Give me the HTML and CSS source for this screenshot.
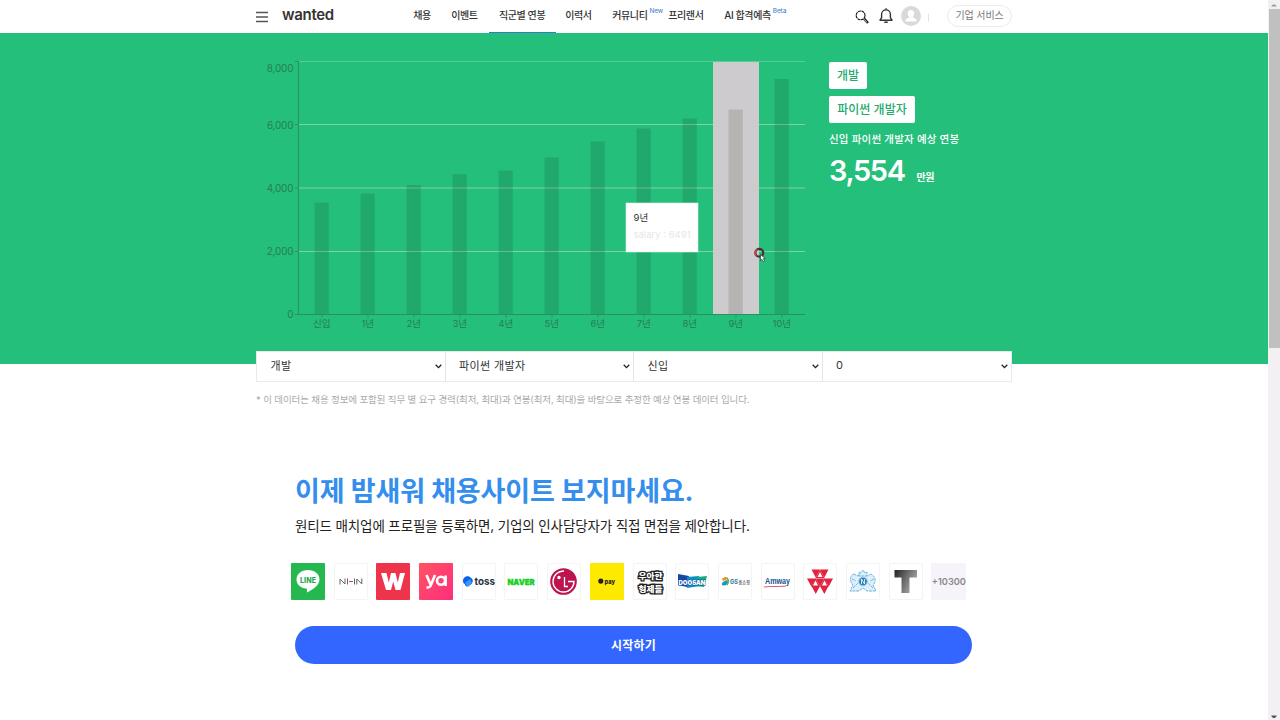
FILE: index.html
```html
<!DOCTYPE html>
<html lang="ko">
<head>
<meta charset="utf-8">
<title>wanted - 직군별 연봉</title>
<link rel="stylesheet" href="styles.css">
</head>
<body>
<div class="page">
  <header class="header">
    <div class="header-inner">
      <div class="brand">
        <svg class="burger" width="12" height="12" viewBox="0 0 12 12" stroke="#555" stroke-width="1.5"><path d="M0 1.500h12M0 6h12M0 10.500h12"/></svg>
        <span class="logo">wanted</span>
      </div>
      <nav class="nav">
        <a>채용</a><a>이벤트</a><a class="active">직군별 연봉</a><a>이력서</a><a>커뮤니티<sup>New</sup></a><a>프리랜서</a><a>AI 합격예측<sup>Beta</sup></a>
      </nav>
      <div class="tools">
        <svg width="14" height="14" viewBox="0 0 14 14" fill="none" stroke="#111"><circle cx="5.600" cy="5.400" r="4.400" stroke-width="1.100" stroke-dasharray="3 .5"/><path d="M9 8.600l4 4.400" stroke-width="2.400"/><path d="M8.700 9l3.600 3.600" stroke="#fff" stroke-width=".8"/></svg>
        <svg class="bell" width="14" height="16" viewBox="0 0 14 16" fill="none" stroke="#333" stroke-width="1.400"><path d="M1 12.200h12L11.400 9.700V6.300a4.400 4.400 0 0 0-8.800 0v3.400L1 12.200z" stroke-linejoin="round"/><path d="M5.300 14.300h3.400M7 .3v1.500"/></svg>
        <svg class="avatar" width="20" height="20" viewBox="0 0 20 20"><circle cx="10" cy="10" r="10" fill="#d9d9d9"/><ellipse cx="10" cy="7.800" rx="3.200" ry="3.700" fill="#fff"/><path d="M4.300 15.600c0-3 2.600-3.400 4.200-4.300h3c1.600.9 4.200 1.300 4.200 4.300z" fill="#fff"/></svg>
        <i class="divider"></i>
        <a class="biz">기업 서비스</a>
      </div>
    </div>
  </header>

  <section class="salary">
    <div class="salary-inner">
      <svg class="chart" width="560" height="290" viewBox="250 50 560 290">
        <g stroke="#82d0a6" stroke-width="1"><path d="M299 61.500h506" stroke="#58cb96"/><path d="M299 124.500h506M299 188h506M299 251.500h506"/></g>
        <rect x="713" y="62" width="46" height="252.500" fill="#cecbce"/>
        <g class="bars">
          <rect x="314.500" y="202.500" width="14.300" height="112"/><rect x="360.500" y="193.500" width="14.300" height="121"/><rect x="406.500" y="185" width="14.300" height="129.500"/><rect x="452.500" y="174.200" width="14.300" height="140.300"/><rect x="498.500" y="170.500" width="14.300" height="144"/><rect x="544.500" y="157.500" width="14.300" height="157"/><rect x="590.500" y="141.500" width="14.300" height="173"/><rect x="636.500" y="128.500" width="14.300" height="186"/><rect x="682.500" y="118.500" width="14.300" height="196"/><rect class="hovered" x="728.500" y="109.500" width="14.300" height="205"/><rect x="774.500" y="79" width="14.300" height="235.500"/>
        </g>
        <g fill="none" stroke="#2c8f61" stroke-width="1"><path d="M298.500 61.500v253H805M295 61.500h4M295 124.500h4M295 188h4M295 251.500h4M295 314.500h4"/><path d="M322 314.500v3M368 314.500v3M414 314.500v3M460 314.500v3M506 314.500v3M552 314.500v3M598 314.500v3M644 314.500v3M690 314.500v3M736 314.500v3M782 314.500v3"/></g>
        <g class="ylab"><text x="293.300" y="72.300">8,000</text><text x="293.300" y="128.800">6,000</text><text x="293.300" y="191.800">4,000</text><text x="293.300" y="255.100">2,000</text><text x="293.300" y="318.300">0</text></g>
        <g class="xlab"><text x="321.700" y="327.200">신입</text><text x="367.700" y="327.200">1년</text><text x="413.700" y="327.200">2년</text><text x="459.700" y="327.200">3년</text><text x="505.700" y="327.200">4년</text><text x="551.700" y="327.200">5년</text><text x="597.700" y="327.200">6년</text><text x="643.700" y="327.200">7년</text><text x="689.700" y="327.200">8년</text><text x="735.700" y="327.200">9년</text><text x="781.700" y="327.200">10년</text></g>
        <rect x="626" y="203" width="72" height="49" fill="#fff" stroke="#dcefe5" stroke-width=".6"/>
        <text class="tip" x="633.500" y="221.300">9년</text>
        <text class="tip faint" x="633.500" y="238.300" textLength="57">salary : 6491</text>
        <circle cx="759.300" cy="252.800" r="3.900" fill="none" stroke="#4b3037" stroke-width="2.200"/><path d="M756.500 256a4 4 0 0 1 1-6.800" fill="none" stroke="#c9424e" stroke-width="1.500"/>
        <path d="M760.500 254.500v6l1.500-1.200 1.300 2.200 1.300-.8-1.200-2.100h1.800z" fill="#fff" stroke="#222" stroke-width=".6"/>
      </svg>
      <div class="summary">
        <span class="tag">개발</span>
        <span class="tag wide">파이썬 개발자</span>
        <p class="expect">신입 파이썬 개발자 예상 연봉</p>
        <p class="amount">3,554<small>만원</small></p>
      </div>
    </div>
  </section>

  <main class="main">
    <div class="filters">
      <div class="filter">개발<svg width="7" height="5" viewBox="0 0 7 5"><path d="M.7.800l2.800 2.800L6.300.800"/></svg></div>
      <div class="filter">파이썬 개발자<svg width="7" height="5" viewBox="0 0 7 5"><path d="M.7.800l2.800 2.800L6.300.800"/></svg></div>
      <div class="filter">신입<svg width="7" height="5" viewBox="0 0 7 5"><path d="M.7.800l2.800 2.800L6.300.800"/></svg></div>
      <div class="filter">0<svg width="7" height="5" viewBox="0 0 7 5"><path d="M.7.800l2.800 2.800L6.300.800"/></svg></div>
    </div>
    <p class="note">* 이 데이터는 채용 정보에 포함된 직무 별 요구 경력(최저, 최대)과 연봉(최저, 최대)을 바탕으로 추정한 예상 연봉 데이터 입니다.</p>

    <section class="match">
      <h2>이제 밤새워 채용사이트 보지마세요.</h2>
      <p class="lead">원티드 매치업에 프로필을 등록하면, 기업의 인사담당자가 직접 면접을 제안합니다.</p>
      <div class="logos">
        <svg viewBox="0 0 34 37"><rect width="34" height="37" rx="1" fill="#25b84f"/><path d="M17 7c-6.500 0-11.500 4-11.500 9.500 0 5 4.300 8.500 9.600 9.100 1.200.2 1.100 1.200.7 4 4-2.100 12.700-6.600 12.700-13.100C28.500 11 23.500 7 17 7z" fill="#fff"/><text x="17" y="19.500" font-size="7" font-weight="800" text-anchor="middle" textLength="16" fill="#25a84d">LINE</text></svg>
        <svg class="plain" viewBox="0 0 34 37"><path d="M6 21.500v-5.500l5 5v-5.500M13.500 15.500v6M20.500 15.500v6M22.800 21.500v-5.500l5 5v-5.500" fill="none" stroke="#666" stroke-width="1"/><path d="M15 18.500h4" stroke="#d83b50"/></svg>
        <svg viewBox="0 0 34 37"><rect width="34" height="37" rx="1" fill="#ed344b"/><path d="M5 10h5.500l2.300 9.500L15 10h4.500l2.300 9.500L24 10h5l-4.500 17h-5L17.200 18.500 15 27h-5z" fill="#fff"/></svg>
        <svg viewBox="0 0 34 37"><defs><linearGradient id="ya" x2="1" y2="1"><stop stop-color="#ff5361"/><stop offset="1" stop-color="#ff2d7e"/></linearGradient></defs><rect width="34" height="37" rx="1" fill="url(#ya)"/><g fill="none" stroke="#fff" stroke-width="2.600"><path d="M7.500 12l4 9.500M16 12l-4.500 11c-.8 1.500-2 1.700-4 1.300"/><circle cx="22" cy="17.700" r="4"/><path d="M26.600 12.500v10.500"/></g></svg>
        <svg class="plain" viewBox="0 0 34 37"><path d="M1 18c0-5 6-6 8-3 3 1 2 6-1 7-2 2-5 2-5-1-1 0-2-1-2-3z" fill="#0b64e8"/><path d="M3 20l5-4 2 4-4 4z" fill="#3999fd"/><text x="12.500" y="22" font-size="10" font-weight="700" textLength="20.500" lengthAdjust="spacingAndGlyphs" fill="#26333f">toss</text></svg>
        <svg class="plain" viewBox="0 0 34 37"><text x="3.500" y="21.500" font-size="8" font-weight="900" textLength="27" lengthAdjust="spacingAndGlyphs" fill="#12cf20" stroke="#12cf20" stroke-width=".3">NAVER</text></svg>
        <svg class="plain" viewBox="0 0 34 37"><circle cx="16.500" cy="18.500" r="13.300" fill="#bd1450"/><path d="M17 8a10.500 10.500 0 1 0 10 10.500H21" fill="none" stroke="#fff" stroke-width="1.300"/><path d="M17.500 14v9.500H21" fill="none" stroke="#fff" stroke-width="1.300"/><circle cx="12" cy="14.500" r="1.700" fill="#fff"/></svg>
        <svg viewBox="0 0 34 37"><rect width="34" height="37" rx="1" fill="#fee900"/><path d="M8.300 17.500a2.500 2 0 0 1 5 0v1.500a2.500 1.700 0 0 1-5 0z" fill="#222"/><text x="14.500" y="20.500" font-size="6.500" font-weight="800" textLength="10.500" lengthAdjust="spacingAndGlyphs" fill="#222">pay</text></svg>
        <svg class="plain" viewBox="0 0 34 37"><g class="woowa"><text x="5.500" y="16" textLength="24" lengthAdjust="spacingAndGlyphs">우아한</text><text x="5.500" y="29" textLength="24" lengthAdjust="spacingAndGlyphs">형제들</text></g></svg>
        <svg class="plain" viewBox="0 0 34 37"><path d="M3 11l11 2-2 11-9-2z" fill="#1746a5"/><path d="M12 14l12-1 1 10-13 2z" fill="#0b91ca"/><path d="M22 14l10-1-3 11-8-1z" fill="#13ac83"/><text x="3.500" y="21.500" font-size="6.500" font-weight="900" textLength="27" lengthAdjust="spacingAndGlyphs" fill="#fff" stroke="#1747a0" stroke-width=".8" paint-order="stroke">DOOSAN</text></svg>
        <svg class="plain" viewBox="0 0 34 37"><path d="M4 16c3-3 6-2 6 0l-5 2z" fill="#f6902b"/><path d="M4 20c3-3 6-4 6-1-1 4-4 4-6 3z" fill="#1797ca"/><path d="M9 15c2 2 2 4 0 7" stroke="#58b64b" stroke-width="1.500" fill="none"/><text x="12" y="21" font-size="6.500" font-weight="700" textLength="8" lengthAdjust="spacingAndGlyphs" fill="#2475a4">GS</text><text x="20.500" y="20.800" font-size="4.800" font-weight="700" textLength="11.500" lengthAdjust="spacingAndGlyphs" fill="#777">홈쇼핑</text></svg>
        <svg class="plain" viewBox="0 0 34 37"><text class="amway" x="4" y="21" textLength="25" lengthAdjust="spacingAndGlyphs">Amway</text><path d="M3 24c7-1 15 0 22-1" stroke="#df5965" fill="none"/></svg>
        <svg class="plain" viewBox="0 0 34 37"><g fill="#e2213e"><path d="M8.500 6.500H17l-4.200 8zM17 6.500h8.500l-4.200 8zM4 15.500h8.500l-4.200 8zM12.800 15.500h8.400L17 23.500zM21.500 15.500H30l-4.200 8zM8.500 23H17l-4.200 8zM17 23h8.500l-4.200 8z"/><path d="M12.500 15l4.500-8.500 4.500 8.500zM8.300 23.500l4.200-8.500 4.500 8.500zM17 23.500l4.500-8.500 4.200 8.500z"/></g><g fill="#fff"><path d="M12.500 17.500l2.500 5h-5zM21.500 17.500l2.500 5h-5zM17 9l2.500 5h-5z"/></g></svg>
        <svg class="plain" viewBox="0 0 34 37"><g fill="#dceffa" stroke="#72b5dc" stroke-width="1" stroke-dasharray="3 .7"><path d="M8 11c-5 2-4 8-1 11l-3 6h9l4-3 4 3h9l-3-6c4-4 2-9-2-11l-4 2-4-3-5 3z"/><path d="M13 13V9l2 1 2-3 2 3 2-1v4zM6 16l4 2M28 16l-4 2M7 25l5-5M27 25l-5-5"/></g><circle cx="17" cy="18.500" r="4.300" fill="#2c80b8" stroke="#9bcbe5"/><path d="M15.500 21v-5l3 5v-5" stroke="#fff" fill="none" stroke-width=".8"/></svg>
        <svg class="plain" viewBox="0 0 34 37"><defs><linearGradient id="t" x1="0" x2="1" y2=".5"><stop stop-color="#222"/><stop offset="1" stop-color="#aaa"/></linearGradient></defs><path d="M5.500 7h22.500v7.500h-7.500V30h-8V14.500h-7z" fill="url(#t)"/></svg>
        <span class="more">+10300</span>
      </div>
      <button class="start">시작하기</button>
    </section>
  </main>
</div>
<aside class="scrollbar">
  <svg width="12" height="7" viewBox="0 0 12 7"><path d="M3 5.500l2-2h2l2 2z" fill="#999"/></svg>
  <div class="thumb"></div>
  <svg class="down" width="12" height="7" viewBox="0 0 12 7"><path d="M3 2.500h6L7 5H5z" fill="#555"/></svg>
</aside>
</body>
</html>
```
FILE: styles.css
```css
* { box-sizing: border-box; }
body { margin: 0; height: 720px; display: flex; overflow: hidden; background: #fff; color: #333; font-family: Inter, "Noto Sans CJK KR", sans-serif; }
p, h2 { margin: 0; white-space: nowrap; }
.page { width: 1268px; height: 720px; }
.header { height: 33px; background: #fff; }
.header-inner { width: 756px; height: 33px; margin: 0 auto; display: flex; }
.brand { width: 148px; display: flex; align-items: center; gap: 14px; }
.logo { font: 600 15px/30px Inter, sans-serif; letter-spacing: -.3px; color: #333; margin-top: -3px; }
.nav { width: 452px; display: grid; grid-template-columns: 38px 47px 67px 47px 56px 56px 70px; }
.nav a { padding-left: 9.500px; font: 500 10px/30px Inter, "Noto Sans CJK KR", sans-serif; letter-spacing: -.4px; white-space: nowrap; color: #333; height: 33px; }
.nav .active { padding-left: 10.200px; border-bottom: 1px solid #3779c8; }
.nav sup { display: inline-block; margin-left: 2px; font-size: 6.500px; font-weight: 400; line-height: 0; letter-spacing: -.1px; color: #3979c0; vertical-align: 6px; }
.tools { flex: 1; display: flex; align-items: center; }
.bell { margin-left: 10px; margin-top: -1px; }
.avatar { margin-left: 7.500px; margin-top: -2px; }
.divider { width: 1px; height: 8px; margin: 3px 18px 0 7.500px; background: #dce9e9; }
.biz { width: 65px; height: 22px; margin-top: -1px; border: 1px solid #ebebeb; border-radius: 11px; color: #777; font-size: 10px; line-height: 19px; letter-spacing: -.1px; text-align: center; white-space: nowrap; flex: none; }
.salary { height: 331px; background: #25bf7c; }
.salary-inner { width: 768px; margin: 0 auto; padding-top: 17px; display: flex; gap: 19px; }
.chart { display: block; flex: none; }
.bars { fill: rgba(20, 85, 50, .2); }
.bars .hovered { fill: #b5b4b3; }
.chart text { font-family: Inter, "Noto Sans CJK KR", sans-serif; }
.ylab { font-size: 9.800px; text-anchor: end; fill: #247e56; letter-spacing: -.1px; }
.xlab { font-size: 9.500px; text-anchor: middle; fill: #247e56; }
.chart .tip { font-size: 9.500px; fill: #333; }
.chart .faint { fill: #e8e5e8; }
.summary { padding-top: 12px; display: flex; flex-direction: column; align-items: flex-start; color: #fff; }
.tag { height: 27px; width: 38px; margin-bottom: 7px; background: #fff; border-radius: 2px; color: #25aa6e; text-align: center; font-size: 12px; font-weight: 500; line-height: 28px; white-space: nowrap; }
.wide { width: 86px; margin-bottom: 6px; }
.expect { font-size: 10.500px; font-weight: 500; line-height: 22px; letter-spacing: .2px; }
.amount { font-size: 29px; line-height: 40px; font-weight: 600; letter-spacing: -1.400px; }
.amount small { margin-left: 12px; font-size: 10px; font-weight: 700; letter-spacing: -.5px; }
.main { width: 756px; margin: -13px auto 0; }
.filters { position: relative; display: grid; grid-template-columns: repeat(4, 1fr); height: 31px; background: #fff; border: 1px solid #eaeaea; }
.filter { display: flex; align-items: center; justify-content: space-between; padding: 0 3px 3px 13.500px; border-right: 1px solid #e4e4e4; font-size: 11px; letter-spacing: .4px; color: #333; }
.filter:last-child { border-right: 0; }
.filter svg { margin-top: 3px; fill: none; stroke: #222; stroke-width: 1.300; }
.note { margin-top: 8px; font-size: 9.500px; line-height: 20px; letter-spacing: -.13px; color: #aaa; }
.match { width: 677px; margin: 60px 0 0 39px; }
h2 { font-size: 27px; line-height: 44px; height: 42px; font-weight: 700; letter-spacing: -.12px; color: #348eed; }
.lead { margin-top: 2px; font-size: 13.500px; line-height: 24px; letter-spacing: -.13px; color: #222; }
.logos { display: flex; gap: 8.700px; margin: 25px 0 26px -4px; }
.logos svg { flex: none; display: block; width: 34px; height: 37px; font-family: Inter, "Noto Sans CJK KR", sans-serif; }
.plain { box-shadow: inset 0 0 0 1px #f4f4f4; border-radius: 2px; }
.woowa { font-size: 8.500px; font-weight: 900; fill: #fff; stroke: #222; stroke-width: 2.600px; paint-order: stroke; }
.amway { font: 700 9px "Liberation Sans", sans-serif; fill: #17518d; }
.more { width: 35px; flex: none; height: 37px; background: #f7f3fa; color: #888; font-size: 9.200px; font-weight: 600; line-height: 37px; text-align: center; }
.start { display: block; width: 677px; height: 38px; border: 0; border-radius: 19px; background: #3366ff; color: #fff; font: 700 12px/36px "Noto Sans CJK KR", sans-serif; letter-spacing: .2px; }
.scrollbar { width: 12px; height: 720px; background: #f2f0f3; display: flex; flex-direction: column; }
.scrollbar svg { flex: none; margin-top: 1px; }
.thumb { margin: 1px 0 0 1px; height: 339px; background: #c1c0c1; }
.scrollbar .down { margin-top: auto; }
```
